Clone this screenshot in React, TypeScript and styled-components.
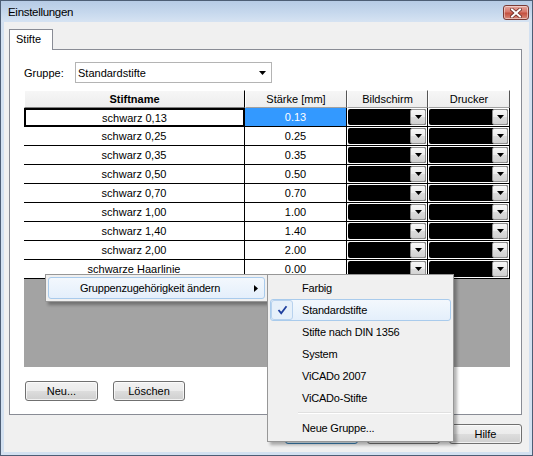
import React from "react";
import styled, { createGlobalStyle, css } from "styled-components";

const GlobalStyle = createGlobalStyle`
  html, body { margin: 0; padding: 0; background: #f0f0f0; }
  body { font-family: "Liberation Sans", Arial, sans-serif; font-size: 11px; color: #000; }
  * { box-sizing: border-box; }
`;

const Window = styled.div`
  position: relative;
  width: 533px;
  height: 456px;
  border: 1px solid #4d5e75;
  background: #d3e1f1;
  display: flex;
  flex-direction: column;
  overflow: hidden;
`;

const TitleBar = styled.div`
  height: 21px;
  flex: none;
  display: flex;
  align-items: flex-start;
  justify-content: space-between;
  padding: 0 3px 0 7px;
  background: linear-gradient(to bottom, #b6cbe5 0%, #c6d8ed 55%, #d6e3f2 100%);
`;

const TitleText = styled.span`
  font-size: 11.5px;
  letter-spacing: -0.3px;
  line-height: 22px;
  color: #000;
`;

const CloseButton = styled.div`
  margin-top: 4px;
  width: 26px;
  height: 15px;
  border: 1px solid #7a3a35;
  border-radius: 3px;
  background: linear-gradient(to bottom, #e4a79f 0%, #d7776b 45%, #c4503f 55%, #d98a7c 100%);
  box-shadow: inset 0 0 0 1px rgba(255, 255, 255, 0.45);
  display: flex;
  align-items: center;
  justify-content: center;
`;

const Client = styled.div`
  flex: 1;
  margin: 0 3px 3px 3px;
  background: #f0f0f0;
  padding: 7px 7px 0 5px;
  display: flex;
  flex-direction: column;
`;

const TabStrip = styled.div`
  display: flex;
  height: 21px;
  margin-bottom: -1px;
  position: relative;
  z-index: 1;
`;

const Tab = styled.div`
  width: 44px;
  height: 21px;
  border: 1px solid #898c95;
  border-bottom: none;
  background: #fff;
  padding-left: 6px;
  line-height: 19px;
`;

const Panel = styled.div`
  height: 366px;
  border: 1px solid #898c95;
  background: #fff;
  padding: 12px 11px 0 14px;
  display: flex;
  flex-direction: column;
`;

const GroupRow = styled.div`
  display: flex;
  align-items: center;
  height: 21px;
`;

const Label = styled.span`
  width: 51px;
`;

const Combo = styled.div`
  width: 197px;
  height: 21px;
  border: 1px solid #b4b4b4;
  background: #fff;
  display: flex;
  align-items: center;
  justify-content: space-between;
  padding: 0 5px 0 2px;
`;

const Grid = styled.div`
  margin-top: 7px;
  width: 486px;
  height: 277px;
  display: flex;
  flex-direction: column;
`;

const cols = "221px 102px 81px 82px";

const HeaderRow = styled.div`
  display: grid;
  grid-template-columns: ${cols};
  height: 18px;
  flex: none;
`;

const HeaderCell = styled.div<{ $bold?: boolean; $first?: boolean }>`
  display: flex;
  align-items: center;
  justify-content: center;
  background: linear-gradient(to bottom, #f6f6f6 0%, #ededed 100%);
  border-top: 1px solid #fff;
  border-left: 1px solid #fff;
  border-bottom: 1px solid ${(p) => (p.$first ? "#808080" : "#a0a0a0")};
  border-right: 1px solid ${(p) => (p.$first ? "#000" : "#555")};
  font-weight: ${(p) => (p.$bold ? "bold" : "normal")};
`;

const DataRow = styled.div`
  display: grid;
  grid-template-columns: ${cols};
  height: 19px;
  flex: none;
`;

const Cell = styled.div<{ $selected?: boolean; $focused?: boolean; $combo?: boolean }>`
  display: flex;
  align-items: center;
  justify-content: center;
  border-right: 1px solid #000;
  border-bottom: 1px solid #000;
  background: ${(p) => (p.$selected ? "#3399ff" : "#fff")};
  color: ${(p) => (p.$selected ? "#fff" : "#000")};
  overflow: hidden;
  white-space: nowrap;
  ${(p) =>
    p.$focused &&
    css`
      border: 2px solid #000;
    `}
  ${(p) =>
    p.$combo &&
    css`
      padding: 1px 1px 1px 1px;
      align-items: stretch;
      justify-content: stretch;
    `}
`;

const ColorCombo = styled.div`
  flex: 1;
  display: flex;
  justify-content: flex-end;
  background: #000;
  border-radius: 2px;
`;

const DropButton = styled.div`
  width: 16px;
  border: 1px solid #8f8f8f;
  border-radius: 2px;
  background: linear-gradient(to bottom, #f7f7f7 0%, #ececec 50%, #dcdcdc 51%, #d0d0d0 100%);
  display: flex;
  align-items: center;
  justify-content: center;
`;

const GridFill = styled.div`
  flex: 1;
  background: #a3a3a3;
`;

const ButtonRow = styled.div`
  display: flex;
  gap: 15px;
  margin-top: 14px;
  padding-left: 1px;
`;

const Button = styled.div<{ $default?: boolean; $width?: number }>`
  width: ${(p) => p.$width ?? 72}px;
  height: 20px;
  border: 1px solid ${(p) => (p.$default ? "#3c7fb1" : "#707070")};
  border-radius: 3px;
  background: ${(p) =>
    p.$default
      ? "linear-gradient(to bottom, #eaf6fd 0%, #d9f0fc 50%, #bee6fd 51%, #a7d9f5 100%)"
      : "linear-gradient(to bottom, #f2f2f2 0%, #ebebeb 50%, #dddddd 51%, #cfcfcf 100%)"};
  box-shadow: inset 0 0 0 1px rgba(255, 255, 255, 0.7);
  display: flex;
  align-items: center;
  justify-content: center;
`;

const DialogButtons = styled.div`
  display: flex;
  justify-content: flex-end;
  gap: 9px;
  margin-top: 9px;
`;

const Menu = styled.div<{ $left: number; $top: number; $width: number }>`
  position: absolute;
  left: ${(p) => p.$left}px;
  top: ${(p) => p.$top}px;
  width: ${(p) => p.$width}px;
  background: #f0f0f0;
  border: 1px solid #979797;
  padding: 2px;
  box-shadow: 3px 3px 3px rgba(0, 0, 0, 0.3);
  z-index: 5;
`;

const MenuItem = styled.div<{ $hot?: boolean }>`
  position: relative;
  height: 22px;
  display: flex;
  align-items: center;
  padding-left: 31px;
  border: 1px solid transparent;
  border-radius: 3px;
  letter-spacing: -0.2px;
  ${(p) =>
    p.$hot &&
    css`
      border-color: #a9cbec;
      background: linear-gradient(to bottom, #f3f8fd 0%, #e4effb 100%);
    `}
`;

const CheckBox = styled.div`
  position: absolute;
  left: 0;
  top: 0;
  width: 22px;
  height: 20px;
  border: 1px solid #b8d2ee;
  border-radius: 3px;
  background: #e6f0fa;
  display: flex;
  align-items: center;
  justify-content: center;
`;

const SubArrow = styled.span`
  margin-left: auto;
  margin-right: 6px;
  display: flex;
`;

const Separator = styled.div`
  height: 8px;
  margin-left: 28px;
  padding-top: 3px;
  &::after {
    content: "";
    display: block;
    border-top: 1px solid #e0e0e0;
    border-bottom: 1px solid #ffffff;
  }
`;

const Tri = () => (
  <svg width="7" height="4" viewBox="0 0 7 4">
    <path d="M0 0 H7 L3.5 4 Z" fill="#000" />
  </svg>
);

const rows = [
  ["schwarz 0,13", "0.13"],
  ["schwarz 0,25", "0.25"],
  ["schwarz 0,35", "0.35"],
  ["schwarz 0,50", "0.50"],
  ["schwarz 0,70", "0.70"],
  ["schwarz 1,00", "1.00"],
  ["schwarz 1,40", "1.40"],
  ["schwarz 2,00", "2.00"],
  ["schwarze Haarlinie", "0.00"],
];

const groups = ["Farbig", "Standardstifte", "Stifte nach DIN 1356", "System", "ViCADo 2007", "ViCADo-Stifte"];

export default function App() {
  return (
    <>
      <GlobalStyle />
      <Window>
        <TitleBar>
          <TitleText>Einstellungen</TitleText>
          <CloseButton>
            <svg width="12" height="10" viewBox="0 0 12 10">
              <path d="M2 1.5 L10 8.5 M10 1.5 L2 8.5" stroke="#6b2a25" strokeWidth="3.6" strokeLinecap="square" />
              <path d="M2 1.5 L10 8.5 M10 1.5 L2 8.5" stroke="#ffffff" strokeWidth="2" strokeLinecap="square" />
            </svg>
          </CloseButton>
        </TitleBar>
        <Client>
          <TabStrip>
            <Tab>Stifte</Tab>
          </TabStrip>
          <Panel>
            <GroupRow>
              <Label>Gruppe:</Label>
              <Combo>
                <span>Standardstifte</span>
                <Tri />
              </Combo>
            </GroupRow>
            <Grid>
              <HeaderRow>
                <HeaderCell $bold $first>
                  Stiftname
                </HeaderCell>
                <HeaderCell>Stärke [mm]</HeaderCell>
                <HeaderCell>Bildschirm</HeaderCell>
                <HeaderCell>Drucker</HeaderCell>
              </HeaderRow>
              {rows.map(([name, val], i) => (
                <DataRow key={name}>
                  <Cell $focused={i === 0}>{name}</Cell>
                  <Cell $selected={i === 0}>{val}</Cell>
                  <Cell $combo>
                    <ColorCombo>
                      <DropButton>
                        <Tri />
                      </DropButton>
                    </ColorCombo>
                  </Cell>
                  <Cell $combo>
                    <ColorCombo>
                      <DropButton>
                        <Tri />
                      </DropButton>
                    </ColorCombo>
                  </Cell>
                </DataRow>
              ))}
              <GridFill />
            </Grid>
            <ButtonRow>
              <Button $width={73}>Neu...</Button>
              <Button $width={72}>Löschen</Button>
            </ButtonRow>
          </Panel>
          <DialogButtons>
            <Button $default $width={73} />
            <Button $width={73} />
            <Button $width={73}>Hilfe</Button>
          </DialogButtons>
        </Client>

        <Menu $left={44} $top={273} $width={223}>
          <MenuItem $hot>
            Gruppenzugehörigkeit ändern
            <SubArrow>
              <svg width="4" height="7" viewBox="0 0 4 7">
                <path d="M0 0 L4 3.5 L0 7 Z" fill="#000" />
              </svg>
            </SubArrow>
          </MenuItem>
        </Menu>

        <Menu $left={266} $top={273} $width={187}>
          {groups.map((g) => (
            <MenuItem key={g} $hot={g === "Standardstifte"}>
              {g === "Standardstifte" && (
                <CheckBox>
                  <svg width="11" height="10" viewBox="0 0 11 10">
                    <path d="M1.5 5 L4.2 8.2 L9.5 1.2" stroke="#1f3f9e" strokeWidth="1.8" fill="none" />
                  </svg>
                </CheckBox>
              )}
              {g}
            </MenuItem>
          ))}
          <Separator />
          <MenuItem>Neue Gruppe...</MenuItem>
        </Menu>
      </Window>
    </>
  );
}
